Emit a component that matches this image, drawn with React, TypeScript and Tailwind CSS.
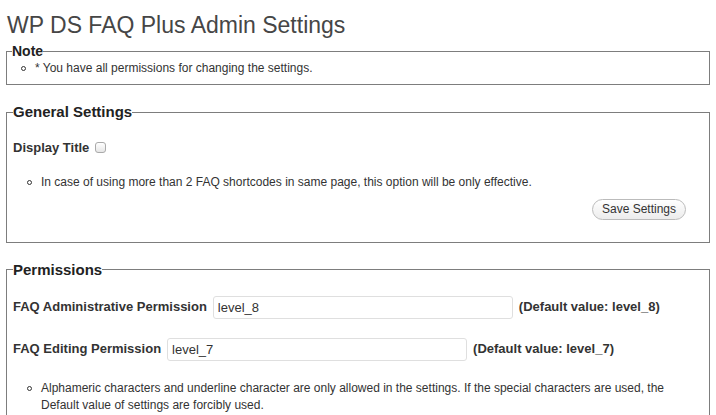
import { useState } from 'react';

function Bullet({ children }: { children: React.ReactNode }) {
    return (
        <li className="flex items-start">
            <span className="mt-[6px] mr-[9px] ml-[14px] h-[5px] w-[5px] shrink-0 rounded-full border border-[#333]" />
            <span>{children}</span>
        </li>
    );
}

function Box({ title, legendClass, className, children }: { title: string; legendClass?: string; className?: string; children: React.ReactNode }) {
    return (
        <fieldset className={`mx-[6px] border border-[#7d7d7d] ${className ?? ''}`}>
            <legend className={`font-bold text-[#222] ${legendClass ?? ''}`}>{title}</legend>
            {children}
        </fieldset>
    );
}

export default function App() {
    const [showTitle, setShowTitle] = useState(false);
    const [adminPerm, setAdminPerm] = useState('level_8');
    const [editPerm, setEditPerm] = useState('level_7');

    return (
        <div className="h-[415px] overflow-hidden bg-white font-['Liberation_Sans',Arial,sans-serif] text-[13px] text-[#333]">
            <h2 className="px-[7px] pt-[11px] pb-[4px] text-[23px] leading-[29px] text-[#464646]">
                WP DS FAQ Plus Admin Settings
            </h2>

            {/* Note */}
            <Box title="Note" legendClass="ml-[5px] text-[14px] leading-[14px]" className="pt-[2px] pb-[7px]">
                <ul className="leading-[17px] text-[12px]">
                    <Bullet>* You have all permissions for changing the settings.</Bullet>
                </ul>
            </Box>

            {/* General settings */}
            <Box title="General Settings" legendClass="text-[15px] leading-[16px]" className="mt-[19px] px-[6px] pb-[22px]">
                <div className="mt-[18px] flex items-center font-bold">
                    Display Title
                    <input
                        type="checkbox"
                        checked={showTitle}
                        onChange={(e) => setShowTitle(e.target.checked)}
                        className="ml-[6px] h-[11px] w-[11px] appearance-none rounded-[3px] border border-[#aaa] bg-gradient-to-b from-white to-[#e6e6e6]"
                    />
                </div>
                <ul className="mt-[16px] leading-[17px] text-[12px]">
                    <Bullet>In case of using more than 2 FAQ shortcodes in same page, this option will be only effective.</Bullet>
                </ul>
                <div className="mt-[8px] flex justify-end pr-[17px]">
                    <button className="h-[21px] rounded-full border border-[#bbb] bg-gradient-to-b from-white to-[#ececec] px-[9px] text-[12px] text-[#333]">
                        Save Settings
                    </button>
                </div>
            </Box>

            {/* Permissions */}
            <Box title="Permissions" legendClass="text-[15px] leading-[16px]" className="mt-[19px] h-[200px] px-[6px]">
                <div className="mt-[18px] flex items-center gap-[6px] font-bold">
                    <span>FAQ Administrative Permission</span>
                    <input
                        value={adminPerm}
                        onChange={(e) => setAdminPerm(e.target.value)}
                        className="h-[23px] w-[300px] rounded-[3px] border border-[#dfdfdf] px-[4px] text-[13px] font-normal text-[#333] outline-none"
                    />
                    <span>(Default value: level_8)</span>
                </div>
                <div className="mt-[19px] flex items-center gap-[6px] font-bold">
                    <span>FAQ Editing Permission</span>
                    <input
                        value={editPerm}
                        onChange={(e) => setEditPerm(e.target.value)}
                        className="h-[23px] w-[300px] rounded-[3px] border border-[#dfdfdf] px-[4px] text-[13px] font-normal text-[#333] outline-none"
                    />
                    <span>(Default value: level_7)</span>
                </div>
                <ul className="mt-[19px] leading-[17px] text-[12px]">
                    <Bullet>
                        Alphameric characters and underline character are only allowed in the settings. If the special characters are used, the Default value of settings are forcibly used.
                    </Bullet>
                </ul>
            </Box>
        </div>
    );
}
